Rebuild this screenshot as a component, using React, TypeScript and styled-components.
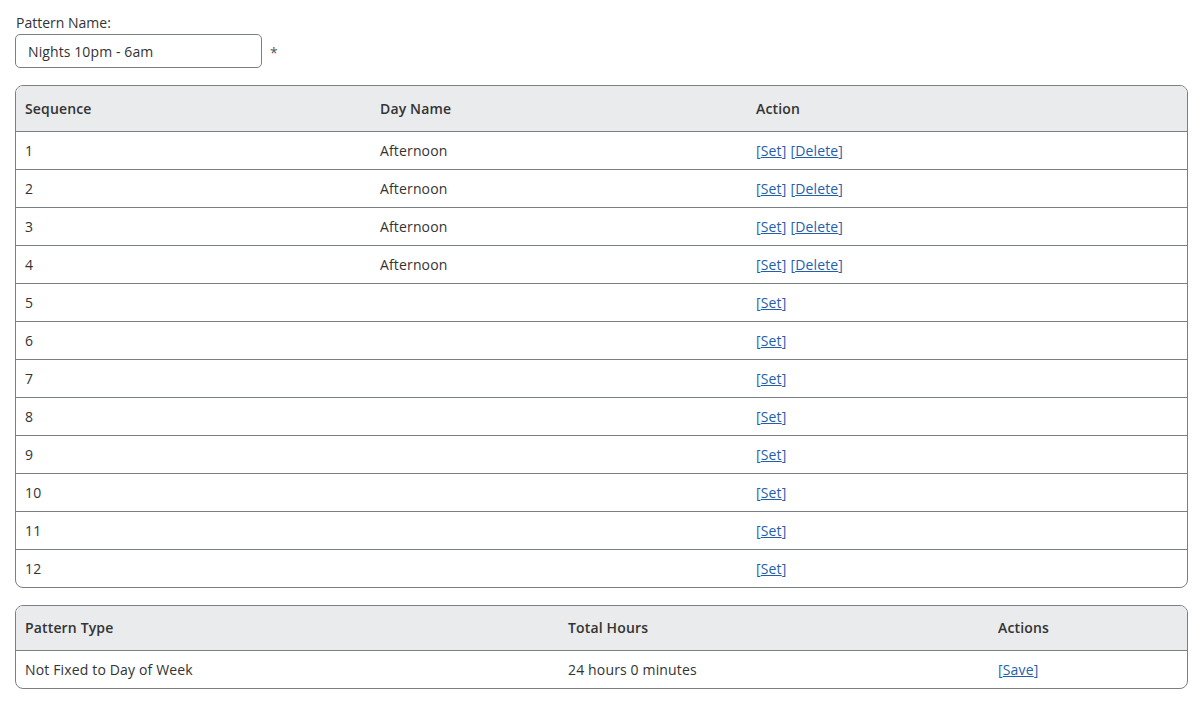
import React from 'react';
import styled, {createGlobalStyle} from 'styled-components';

const GlobalStyle = createGlobalStyle`
  body {
    margin: 0;
    background: #ffffff;
    font-family: 'Open Sans', 'Liberation Sans', sans-serif;
    font-size: 14px;
    color: #333333;
  }
`;

const Page = styled.div`
  padding: 13px 10px 16px 15px;
`;

const FieldLabel = styled.label`
  display: block;
  padding-left: 1px;
  line-height: 20px;
  margin-bottom: 1px;
`;

const FieldRow = styled.div`
  display: flex;
  align-items: center;
  gap: 8px;
  margin-bottom: 17px;
`;

const NameInput = styled.input`
  box-sizing: border-box;
  width: 247px;
  height: 34px;
  padding: 0 12px;
  border: 1px solid #7a7f86;
  border-radius: 5px;
  font-family: inherit;
  font-size: 14px;
  letter-spacing: 0.1px;
  color: #333333;
  outline: none;
`;

const Required = styled.span`
  color: #555;
  padding-top: 2px;
`;

const TableFrame = styled.div<{spaced?: boolean}>`
  border: 1px solid #7a7f86;
  border-radius: 8px;
  overflow: hidden;
  margin-bottom: ${props => (props.spaced ? '17px' : '0')};
`;

const Table = styled.table`
  width: 100%;
  border-collapse: collapse;
  table-layout: fixed;
  letter-spacing: 0.15px;
`;

const HeadCell = styled.th<{width?: string}>`
  box-sizing: border-box;
  width: ${props => props.width || 'auto'};
  height: 45px;
  background: #e9ebed;
  text-align: left;
  font-weight: 600;
  color: #333333;
  padding: 0 9px;
  border-bottom: 1px solid #7a7f86;
`;

const Row = styled.tr`
  & + & td {
    border-top: 1px solid #7a7f86;
  }
`;

const Cell = styled.td`
  height: 37px;
  padding: 0 9px;
  vertical-align: middle;
`;

const ActionLink = styled.a`
  color: #1f5fae;
  text-decoration: none;
  cursor: pointer;
  margin-right: 4px;

  span {
    text-decoration: underline;
  }
`;

type SequenceRow = {seq: number; day?: string};

const rows: SequenceRow[] = Array.from({length: 12}, (_, i) => ({
  seq: i + 1,
  day: i < 4 ? 'Afternoon' : undefined,
}));

function Bracket({label}: {label: string}) {
  return (
    <ActionLink>
      [<span>{label}</span>]
    </ActionLink>
  );
}

export default function App() {
  return (
    <>
      <GlobalStyle />
      <Page>
        <FieldLabel>Pattern Name:</FieldLabel>
        <FieldRow>
          <NameInput defaultValue="Nights 10pm - 6am" />
          <Required>*</Required>
        </FieldRow>

        <TableFrame spaced>
          <Table>
            <thead>
              <tr>
                <HeadCell width="355px">Sequence</HeadCell>
                <HeadCell width="376px">Day Name</HeadCell>
                <HeadCell>Action</HeadCell>
              </tr>
            </thead>
            <tbody>
              {rows.map(r => (
                <Row key={r.seq}>
                  <Cell>{r.seq}</Cell>
                  <Cell>{r.day}</Cell>
                  <Cell>
                    <Bracket label="Set" />
                    {r.day && <Bracket label="Delete" />}
                  </Cell>
                </Row>
              ))}
            </tbody>
          </Table>
        </TableFrame>

        <TableFrame>
          <Table>
            <thead>
              <tr>
                <HeadCell width="543px">Pattern Type</HeadCell>
                <HeadCell width="430px">Total Hours</HeadCell>
                <HeadCell>Actions</HeadCell>
              </tr>
            </thead>
            <tbody>
              <Row>
                <Cell>Not Fixed to Day of Week</Cell>
                <Cell>24 hours 0 minutes</Cell>
                <Cell>
                  <Bracket label="Save" />
                </Cell>
              </Row>
            </tbody>
          </Table>
        </TableFrame>
      </Page>
    </>
  );
}
